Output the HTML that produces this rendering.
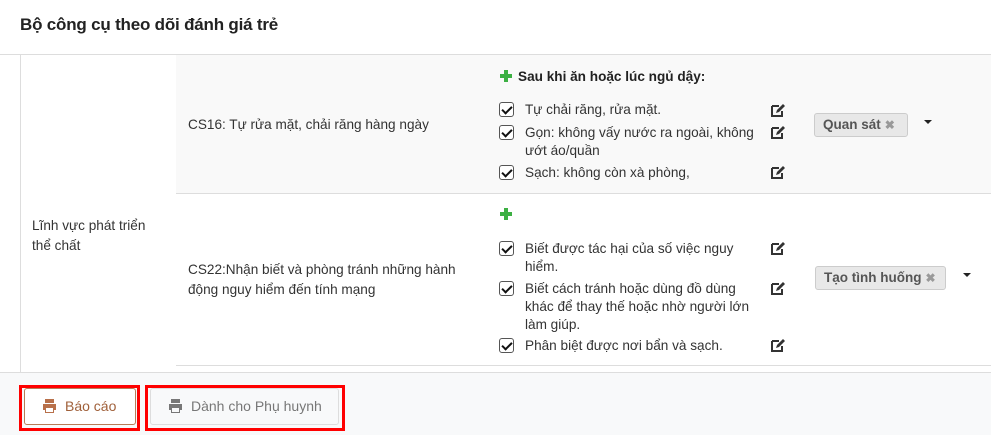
<!DOCTYPE html>
<html><head><meta charset="utf-8"><style>
*{box-sizing:border-box;margin:0;padding:0}
body{width:991px;height:435px;overflow:hidden;background:#fff;font-family:"Liberation Sans",sans-serif;font-size:14px;color:#333;position:relative}
.a{position:absolute}
.cb{position:absolute;width:15px;height:15px;border:1px solid #555;border-radius:3px;background:#fff}
.cb:after{content:"";position:absolute;left:4px;top:1px;width:4px;height:8px;border:solid #111;border-width:0 2.5px 2.5px 0;transform:rotate(45deg)}
.t{position:absolute;font-size:13.6px;line-height:18px;color:#333;white-space:nowrap}
.ed{position:absolute;width:16px;height:15px}
.tag{position:absolute;height:24px;background:#e8e8e8;border:1px solid #ccc;border-radius:3px;font-weight:bold;color:#555;font-size:13.5px;line-height:22px;padding:0 8px;white-space:nowrap}
.tag span{color:#999;margin-left:4px;font-size:12px}
.car{position:absolute;width:0;height:0;border-left:4px solid transparent;border-right:4px solid transparent;border-top:4px solid #222}
.plus{position:absolute;width:12px;height:12px}
.plus:before{content:"";position:absolute;left:4px;top:0;width:4px;height:12px;background:#3cb043}
.plus:after{content:"";position:absolute;left:0;top:4px;width:12px;height:4px;background:#3cb043}
</style></head><body>
<div class="a" style="left:20px;top:15px;font-size:17px;font-weight:bold;color:#222;letter-spacing:-0.2px">Bộ công cụ theo dõi đánh giá trẻ</div>
<div class="a" style="left:0;top:54px;width:991px;height:1px;background:#ddd"></div>
<div class="a" style="left:20px;top:55px;width:1px;height:317px;background:#ddd"></div>
<div class="a" style="left:176px;top:55px;width:815px;height:138px;background:#f9f9f9"></div>
<div class="a" style="left:176px;top:193px;width:815px;height:1px;background:#ddd"></div>
<div class="a" style="left:176px;top:365px;width:815px;height:1px;background:#ddd"></div>
<div class="t" style="left:32px;top:216px;line-height:20px">Lĩnh vực phát triển<br>thể chất</div>
<div class="t" style="left:188px;top:116px">CS16: Tự rửa mặt, chải răng hàng ngày</div>
<div class="t" style="left:188px;top:260px;line-height:20px">CS22:Nhận biết và phòng tránh những hành<br>động nguy hiểm đến tính mạng</div>
<div class="plus" style="left:500px;top:70px"></div>
<div class="a" style="left:518px;top:69px;font-weight:bold;font-size:13.6px;color:#222">Sau khi ăn hoặc lúc ngủ dậy:</div>
<div class="plus" style="left:500px;top:208px"></div>
<div class="cb" style="left:499px;top:102px"></div><div class="t" style="left:525px;top:101px">Tự chải răng, rửa mặt.</div>
<div class="cb" style="left:499px;top:125px"></div><div class="t" style="left:525px;top:124px">Gọn: không vấy nước ra ngoài, không<br>ướt áo/quần</div>
<div class="cb" style="left:499px;top:165px"></div><div class="t" style="left:525px;top:164px">Sạch: không còn xà phòng,</div>
<div class="cb" style="left:499px;top:241px"></div><div class="t" style="left:525px;top:240px">Biết được tác hại của số việc nguy<br>hiểm.</div>
<div class="cb" style="left:499px;top:281px"></div><div class="t" style="left:525px;top:280px">Biết cách tránh hoặc dùng đồ dùng<br>khác để thay thế hoặc nhờ người lớn<br>làm giúp.</div>
<div class="cb" style="left:499px;top:338px"></div><div class="t" style="left:525px;top:337px">Phân biệt được nơi bẩn và sạch.</div>
<svg class="ed" style="left:770px;top:103px" viewBox="0 0 16 15"><path d="M2 3h7M2 3v10h10V8" stroke="#333" stroke-width="2" fill="none"/><path d="M6 10l1-3 6-6 2 2-6 6z" fill="#333"/></svg>
<svg class="ed" style="left:770px;top:125px" viewBox="0 0 16 15"><path d="M2 3h7M2 3v10h10V8" stroke="#333" stroke-width="2" fill="none"/><path d="M6 10l1-3 6-6 2 2-6 6z" fill="#333"/></svg>
<svg class="ed" style="left:770px;top:165px" viewBox="0 0 16 15"><path d="M2 3h7M2 3v10h10V8" stroke="#333" stroke-width="2" fill="none"/><path d="M6 10l1-3 6-6 2 2-6 6z" fill="#333"/></svg>
<svg class="ed" style="left:770px;top:241px" viewBox="0 0 16 15"><path d="M2 3h7M2 3v10h10V8" stroke="#333" stroke-width="2" fill="none"/><path d="M6 10l1-3 6-6 2 2-6 6z" fill="#333"/></svg>
<svg class="ed" style="left:770px;top:281px" viewBox="0 0 16 15"><path d="M2 3h7M2 3v10h10V8" stroke="#333" stroke-width="2" fill="none"/><path d="M6 10l1-3 6-6 2 2-6 6z" fill="#333"/></svg>
<svg class="ed" style="left:770px;top:338px" viewBox="0 0 16 15"><path d="M2 3h7M2 3v10h10V8" stroke="#333" stroke-width="2" fill="none"/><path d="M6 10l1-3 6-6 2 2-6 6z" fill="#333"/></svg>
<div class="tag" style="left:814px;top:113px;width:94px">Quan sát<span>✖</span></div>
<div class="car" style="left:924px;top:120px"></div>
<div class="tag" style="left:815px;top:266px;width:131px">Tạo tình huống<span>✖</span></div>
<div class="car" style="left:963px;top:273px"></div>
<div class="a" style="left:0;top:372px;width:991px;height:63px;background:#f8f9fa;border-top:1px solid #ddd"></div>
<div class="a" style="left:19px;top:385px;width:121px;height:46px;border:3px solid #f00"></div>
<div class="a" style="left:24px;top:388px;width:112px;height:37px;border:1px solid #b87b56;border-radius:3px;background:#fff;color:#a0603a;line-height:35px;padding-left:40px;font-size:14px">Báo cáo</div>
<svg class="a" style="left:42px;top:399px" width="15" height="14" viewBox="0 0 15 14"><path d="M3 0h9v4H3zM1 5h13v6h-2v3H3v-3H1zM4 9v4h7V9z" fill="#b8704a" fill-rule="evenodd"/></svg>
<div class="a" style="left:145px;top:385px;width:200px;height:46px;border:3px solid #f00"></div>
<div class="a" style="left:150px;top:388px;width:189px;height:37px;border:1px solid #ddd;border-radius:3px;background:#f8f9fa;color:#777;line-height:35px;padding-left:40px;font-size:14px">Dành cho Phụ huynh</div>
<svg class="a" style="left:168px;top:399px" width="15" height="14" viewBox="0 0 15 14"><path d="M3 0h9v4H3zM1 5h13v6h-2v3H3v-3H1zM4 9v4h7V9z" fill="#777" fill-rule="evenodd"/></svg>
</body></html>
